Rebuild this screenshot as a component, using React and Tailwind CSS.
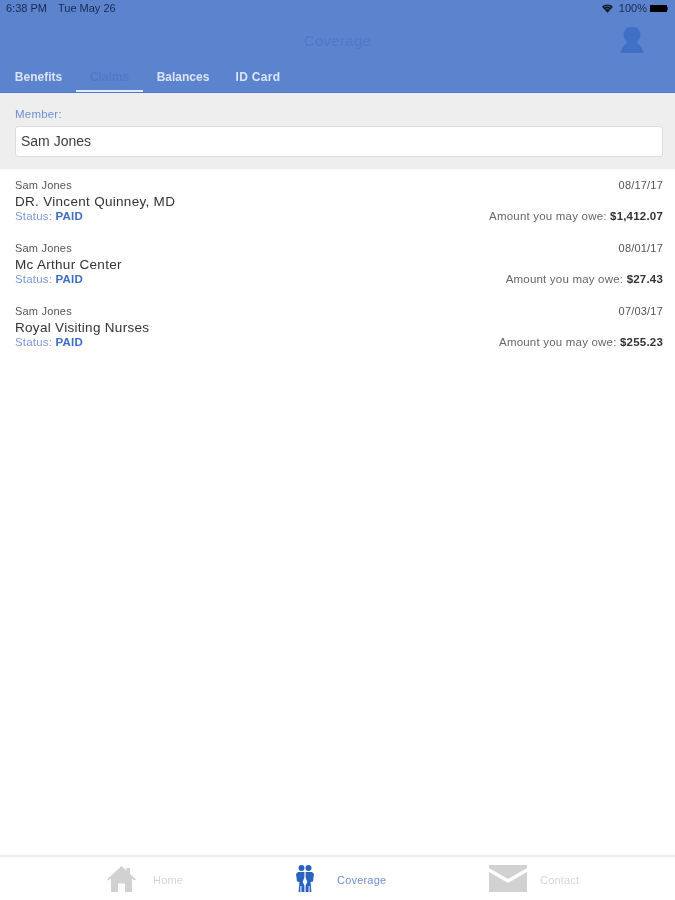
import React from "react";

const claims = [
  { name: "DR. Vincent Quinney, MD", date: "08/17/17", amount: "$1,412.07" },
  { name: "Mc Arthur Center", date: "08/01/17", amount: "$27.43" },
  { name: "Royal Visiting Nurses", date: "07/03/17", amount: "$255.23" },
];

function Wifi() {
  return (
    <svg width="11" height="9" viewBox="0 0 13 10" fill="#111827">
      <path d="M6.5 10 L0 3 C3.6 -0.6 9.4 -0.6 13 3 Z" />
      <path d="M2.6 3.6 C4.9 1.8 8.1 1.8 10.4 3.6" stroke="#5c83cd" strokeWidth="0.8" fill="none" />
      <path d="M4.3 6 C5.6 5 7.4 5 8.7 6" stroke="#5c83cd" strokeWidth="0.8" fill="none" />
    </svg>
  );
}

function Person() {
  return (
    <svg width="24" height="26" viewBox="0 0 24 26" fill="#3f6fc6">
      <ellipse cx="12" cy="8" rx="8.5" ry="8.5" />
      <path d="M7 15 L17 15 L21 20 L24 26 L0 26 L3 20 Z" />
    </svg>
  );
}

function Home() {
  return (
    <svg width="29" height="26" viewBox="0 0 29 26" fill="#d1d1d1">
      <path d="M14.5 0 L19.5 4.6 L19.5 2 L23 2 L23 7.8 L29 13.5 L27.6 14.6 L25 12.6 L25 26 L18 26 L18 17.5 L11 17.5 L11 26 L4 26 L4 12.6 L1.4 14.6 L0 13.5 Z" />
    </svg>
  );
}

function Family() {
  return (
    <svg width="18" height="27" viewBox="0 0 18 27" fill="#2a62c0">
      <circle cx="5.5" cy="3" r="3" />
      <circle cx="12.5" cy="3" r="3" />
      <path d="M2 7 L8.4 7 L8.4 12 C8 14 7 15.5 6.8 17 C7 18.5 8.4 19.5 8.4 21 L8.4 27 L5.4 27 L5.4 21 L4.4 21 L4.4 27 L2.6 27 L3.4 17 L1 16.5 L0 9 Z" />
      <path d="M9.6 7 L16 7 L18 9 L17 16.5 L14.6 17 L15.4 27 L13.6 27 L13.6 21 L12.6 21 L12.6 27 L9.6 27 L9.6 21 C9.6 19.5 11 18.5 11.2 17 C11 15.5 10 14 9.6 12 Z" />
    </svg>
  );
}

function Mail() {
  return (
    <svg width="38" height="27" viewBox="0 0 38 27" fill="#d1d1d1">
      <path d="M0 0 L38 0 L38 3 L19 14 L0 3 Z" />
      <path d="M0 7 L19 18 L38 7 L38 27 L0 27 Z" />
    </svg>
  );
}

export default function App() {
  return (
    <div className="flex h-[900px] w-[675px] flex-col overflow-hidden bg-white font-['Liberation_Sans',Arial,sans-serif] blur-[0.5px]">
      <header className="flex h-[93px] flex-col border-b border-[#4f79c8] bg-[#5c83cd]">
        <div className="flex h-4 items-center justify-between pl-[6px] pr-[7px] pt-[1px] text-[11px] text-[#172a4f]">
          <div className="flex gap-[11px]">
            <span>6:38 PM</span>
            <span>Tue May 26</span>
          </div>
          <div className="flex items-center">
            <Wifi />
            <span className="ml-[6px] mr-[3px]">100%</span>
            <span className="h-[7px] w-[17px] bg-black" />
            <span className="h-[3px] w-[1px] bg-[#172a4f]" />
          </div>
        </div>
        <div className="relative flex h-[47px] items-center justify-center">
          <span className="pt-[3px] text-[15px] tracking-[0.3px] text-[#4f79c8]">Coverage</span>
          <div className="absolute right-[31px] top-[11px]">
            <Person />
          </div>
        </div>
        <nav className="mt-auto flex h-[29px] items-stretch pl-[1px] text-[12px] font-bold text-[#dbe4f5]">
          <span className="flex w-[75px] items-center justify-center pb-[2px]">Benefits</span>
          <span className="flex w-[67px] items-center justify-center border-b-[2px] border-[#e6ecf7] text-[#5079c8]">Claims</span>
          <span className="flex w-[80px] items-center justify-center pb-[2px]">Balances</span>
          <span className="flex w-[70px] items-center justify-center pb-[2px] tracking-[0.3px]">ID Card</span>
        </nav>
      </header>

      <section className="flex h-[76px] flex-col bg-[#eeeeee] pl-[15px] pr-[12px] pt-[13px]">
        <label className="text-[11.5px] leading-[16px] tracking-[0.2px] text-[#6f8fd3]">Member:</label>
        <div className="mt-[4px] flex h-[31px] items-center rounded-[3px] border border-[#dcdcdc] bg-white pl-[5px] text-[14px] text-[#3d3d3d]">
          Sam Jones
        </div>
      </section>

      <main className="flex flex-1 flex-col gap-[15px] pl-[15px] pr-[12px] pt-[9px]">
        {claims.map((c) => (
          <div key={c.name} className="flex h-[48px] flex-col">
            <div className="flex h-[15px] items-center justify-between text-[11px] tracking-[0.2px] text-[#555555]">
              <span>Sam Jones</span>
              <span>{c.date}</span>
            </div>
            <div className="mt-[1px] h-[16px] text-[13.5px] leading-[16px] tracking-[0.3px] text-[#333333]">{c.name}</div>
            <div className="flex h-[14px] items-center justify-between text-[11.5px] tracking-[0.2px]">
              <span className="text-[#7d9ad9]">
                Status: <span className="font-bold text-[#3f6cc4]">PAID</span>
              </span>
              <span className="text-[#666666]">
                Amount you may owe: <span className="font-bold text-[#333333]">{c.amount}</span>
              </span>
            </div>
          </div>
        ))}
      </main>

      <footer className="flex h-[45px] items-center border-t-[2px] border-[#eeeeee] bg-white text-[11px] tracking-[0.2px]">
        <div className="flex w-[225px] items-center pl-[107px]">
          <Home />
          <span className="ml-[17px] pt-[3px] text-[#d6d6d6]">Home</span>
        </div>
        <div className="flex w-[183px] items-center pl-[71px]">
          <Family />
          <span className="ml-[23px] pt-[3px] text-[#6f8fd3]">Coverage</span>
        </div>
        <div className="flex items-center pl-[81px]">
          <Mail />
          <span className="ml-[13px] pt-[3px] text-[#d6d6d6]">Contact</span>
        </div>
      </footer>
    </div>
  );
}
